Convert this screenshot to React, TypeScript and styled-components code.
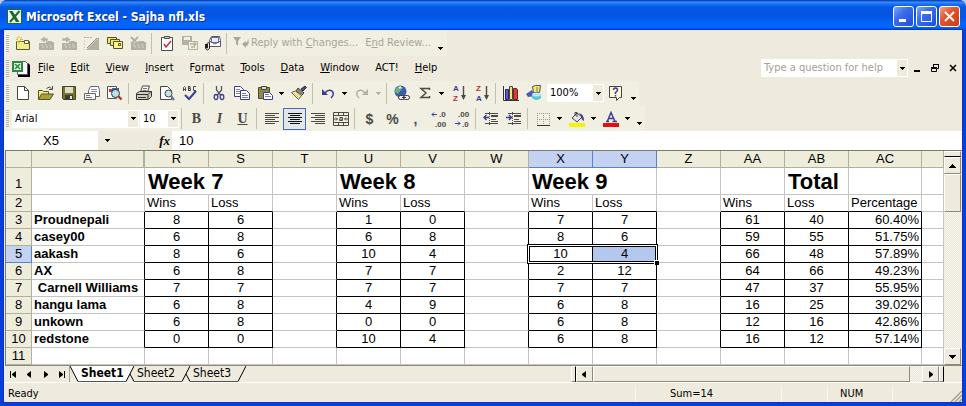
import React from "react";
import styled, { createGlobalStyle, css } from "styled-components";

const UI_FONT = `"DejaVu Sans Condensed", "DejaVu Sans", sans-serif`;
const CELL_FONT = `"Liberation Sans", Arial, sans-serif`;
const FACE = "#eeebde";
const BAR = "#f0efe2";

const Global = createGlobalStyle`
  *, *::before, *::after { box-sizing: border-box; }
  body { margin: 0; background: #b9c8e4; font: 11px/14px ${UI_FONT}; color: #000; }
  button, input, select { font: inherit; color: inherit; margin: 0; padding: 0; border: 0; background: none; border-radius: 0; outline: none; }
  svg { display: block; flex: none; }
`;

/* ---------- window frame ---------- */

const Window = styled.div`
  display: flex;
  flex-direction: column;
  min-height: 100vh;
  border-radius: 7px 7px 0 0;
  overflow: hidden;
  background: #0a3fd6;
`;

const TitleBar = styled.header`
  display: flex;
  align-items: center;
  gap: 4px;
  height: 30px;
  padding: 3px 6px 0 7px;
  background: linear-gradient(#0a48c4 0, #0a48c4 1px, #3d92ff 2px, #1a72f4 4px, #0458e4 7px, #0455e2 16px, #0263fa 22px, #0267ff 27px, #0348d0 30px);
`;

const Title = styled.h1`
  flex: 1;
  margin: 0;
  color: #fff;
  font: bold 12px/18px ${UI_FONT};
  text-shadow: 1px 1px 0 #0a2f8c;
  white-space: nowrap;
`;

const CaptionButtons = styled.div`
  display: flex;
  gap: 2px;
`;

const CaptionButton = styled.button<{ $close?: boolean }>`
  display: grid;
  place-items: center;
  width: 21px;
  height: 21px;
  border: 1px solid #fff;
  border-radius: 3px;
  background: ${(p) =>
    p.$close
      ? "linear-gradient(135deg, #f0a088 0, #e4552c 40%, #cc3c12 100%)"
      : "linear-gradient(135deg, #7fa6f6 0, #3a6cec 40%, #1b4fdc 100%)"};
`;

const Body = styled.div`
  display: flex;
  flex: 1;
  flex-direction: column;
  margin: 0 4px 4px;
  background: ${FACE};
  outline: 1px solid #0831d9;
`;

/* ---------- toolbars ---------- */

const Dock = styled.div<{ $height: number }>`
  display: flex;
  align-items: center;
  height: ${(p) => p.$height}px;
`;

const Bar = styled.div`
  display: flex;
  align-items: center;
  height: 25px;
  padding-left: 2px;
  background: ${BAR};
  border-radius: 2px;
`;

const Grip = styled.span`
  width: 3px;
  height: 17px;
  margin-right: 2px;
  background: repeating-linear-gradient(#b9b6a4 0 1px, ${BAR} 1px 2px);
`;

const Sep = styled.span`
  width: 1px;
  height: 21px;
  margin: 0 3px 0 2px;
  background: #c2bfae;
`;

const ToolButton = styled.button<{ $on?: boolean }>`
  display: grid;
  place-items: center;
  width: 23px;
  height: 22px;
  ${(p) =>
    p.$on &&
    css`
      background: #e1e6e8;
      border: 1px solid #4a6cb8;
    `}
`;

const DropButton = styled.button<{ $wide?: boolean; $low?: boolean }>`
  display: grid;
  place-items: center;
  width: ${(p) => (p.$wide ? 12 : 11)}px;
  height: 22px;
  padding-top: ${(p) => (p.$low ? 10 : 0)}px;
`;

const TextButton = styled.button`
  display: flex;
  align-items: center;
  gap: 2px;
  height: 22px;
  padding: 0 4px 0 3px;
  color: #a9a695;
  white-space: nowrap;
`;

const MenuRow = styled.nav`
  display: flex;
  align-items: center;
  height: 24px;
  padding-left: 2px;
`;

const MenuIcon = styled.span`
  margin-left: 1px;
`;

const MenuButton = styled.button`
  height: 20px;
  padding: 0 8px;
  white-space: nowrap;
`;

const Spacer = styled.span`
  flex: 1;
`;

const AskBox = styled.div`
  display: flex;
  width: 147px;
  height: 18px;
  background: #fff;
`;

const AskInput = styled.input`
  flex: 1;
  min-width: 0;
  padding-left: 3px;
  &::placeholder { color: #a4a195; opacity: 1; }
`;

const AskDrop = styled.button`
  display: grid;
  place-items: center;
  width: 12px;
  border: 1px solid #fff;
  background: ${FACE};
`;

const DocButtons = styled.div`
  display: flex;
`;

const DocButton = styled.button`
  display: grid;
  place-items: center;
  width: 18px;
  height: 18px;
`;

const Combo = styled.label<{ $width: number; $gap: number }>`
  display: grid;
  grid-template-columns: 1fr 12px;
  width: ${(p) => p.$width}px;
  height: 18px;
  margin-left: ${(p) => p.$gap}px;
  background: #fff;
`;

const ComboSelect = styled.select`
  grid-area: 1 / 1 / 2 / 3;
  appearance: none;
  padding-left: 3px;
`;

const ComboArrow = styled.span`
  grid-area: 1 / 2;
  display: grid;
  place-items: center;
  border: 1px solid #fff;
  background: ${FACE};
  pointer-events: none;
`;

const Glyph = styled.span<{ $look: "bold" | "italic" | "underline" | "plain" }>`
  font: bold 14px/16px "Liberation Serif", serif;
  color: #4a4a46;
  ${(p) => p.$look === "italic" && "font-style: italic;"}
  ${(p) => p.$look === "underline" && "text-decoration: underline;"}
  ${(p) => p.$look === "plain" && `font: bold 14px/16px ${CELL_FONT};`}
`;

/* ---------- formula bar ---------- */

const FormulaBar = styled.div`
  display: flex;
  height: 19px;
  font: 13px/18px ${CELL_FONT};
  background: #fff;
`;

const NameBox = styled.input`
  width: 94px;
  text-align: center;
`;

const FormulaTools = styled.div`
  display: flex;
  align-items: center;
  justify-content: space-between;
  width: 74px;
  padding: 0 2px 0 3px;
  background: ${FACE};
`;

const FxButton = styled.button`
  font: italic bold 13px/16px "Liberation Serif", serif;
`;

const FormulaInput = styled.input`
  flex: 1;
  min-width: 0;
  padding-left: 7px;
`;

/* ---------- worksheet ---------- */

const Workspace = styled.div`
  display: flex;
  flex: 1;
  margin-left: 1px;
  border-top: 1px solid #7d7b6d;
  border-left: 1px solid #7d7b6d;
`;

const SheetPane = styled.div`
  flex: 1;
  min-width: 0;
  overflow: hidden;
  background: #fff;
`;

const Grid = styled.table`
  width: 100%;
  table-layout: fixed;
  border-collapse: separate;
  border-spacing: 0;
  font: 13px/16px ${CELL_FONT};
`;

const Col = styled.col<{ $w?: number }>`
  ${(p) => p.$w && `width: ${p.$w}px;`}
`;

const HeadCell = styled.th<{ $active?: boolean; $split?: boolean; $tall?: boolean }>`
  height: ${(p) => (p.$tall ? 27 : 17)}px;
  padding: 0;
  font-weight: normal;
  vertical-align: bottom;
  text-align: center;
  line-height: ${(p) => (p.$tall ? 20 : 16)}px;
  background: ${(p) => (p.$active ? "#c3d2f0" : "#eeeddb")};
  border: solid ${(p) => (p.$active ? "#5a82c6" : "#b2b09c")};
  border-width: 0 ${(p) => (p.$split ? 2 : 1)}px 1px 0;
`;

const Cell = styled.td<{
  $align?: "left" | "center" | "right";
  $bold?: boolean;
  $right?: boolean;
  $bottom?: boolean;
  $fill?: boolean;
}>`
  position: relative;
  height: 17px;
  padding: 0 2px;
  vertical-align: bottom;
  white-space: nowrap;
  text-align: ${(p) => p.$align ?? "left"};
  font-weight: ${(p) => (p.$bold ? "bold" : "normal")};
  background: ${(p) => (p.$fill ? "#b4c8ee" : "#fff")};
  border: solid #c4c4c4;
  border-width: 0 1px 1px 0;
  ${(p) => p.$right && "border-right-color: #000;"}
  ${(p) => p.$bottom && "border-bottom-color: #000;"}
`;

const TitleCell = styled(Cell)`
  height: 27px;
  padding: 0 3px;
  font: bold 22px/24px ${CELL_FONT};
`;

const SelectionFrame = styled.div`
  position: absolute;
  z-index: 1;
  top: -2px;
  left: -2px;
  width: 131px;
  height: 20px;
  border: 1px solid #000;
  box-shadow: inset 0 0 0 1px #fff, inset 0 0 0 2px #000;
  pointer-events: none;
  &::after {
    content: "";
    position: absolute;
    right: -2px;
    bottom: -2px;
    width: 5px;
    height: 5px;
    background: #000;
    border: solid #fff;
    border-width: 1px 0 0 1px;
  }
`;

/* ---------- scroll bars and tabs ---------- */

const track = css`
  background: repeating-conic-gradient(#f7f5ee 0 25%, #e9e6da 0 50%) 0 0 / 2px 2px;
`;

const raised = css`
  background: ${FACE};
  border: 1px solid;
  border-color: #fff #8d8a7b #8d8a7b #fff;
`;

const VScroll = styled.div`
  display: flex;
  flex-direction: column;
  width: 17px;
  margin-right: 1px;
  ${track}
`;

const SplitV = styled.span`
  height: 6px;
  ${raised}
  border-bottom: 1px solid #000;
`;

const ScrollButton = styled.button`
  display: grid;
  place-items: center;
  width: 17px;
  height: 17px;
  ${raised}
`;

const ThumbV = styled.span`
  height: 38px;
  ${raised}
`;

const BottomRow = styled.div`
  display: grid;
  grid-template-columns: 13fr 9fr;
  height: 17px;
  border-top: 1px solid #8d8a7b;
  margin-left: 1px;
`;

const TabStrip = styled.div`
  display: flex;
  min-width: 0;
`;

const NavButton = styled.button`
  display: grid;
  place-items: center;
  width: 16px;
  height: 16px;
`;

const NavEnd = styled.span`
  width: 1px;
  background: #a5a293;
`;

const Tab = styled.button<{ $on?: boolean }>`
  display: flex;
  height: 16px;
  font: ${(p) => (p.$on ? "bold" : "normal")} 12px/15px ${UI_FONT};
`;

const TabLabel = styled.span<{ $on?: boolean }>`
  width: 48px;
  height: 16px;
  padding-left: 3px;
  text-align: left;
  background: ${(p) => (p.$on ? "#fff" : FACE)};
  border-bottom: 1px solid #55534a;
`;

const HScroll = styled.div`
  display: flex;
  min-width: 0;
  ${track}
`;

const SplitH = styled.span`
  width: 5px;
  ${raised}
  border-right: 1px solid #000;
`;

const HButton = styled(ScrollButton)`
  height: 16px;
`;

const ThumbH = styled.span`
  flex: 1;
  margin-right: 12px;
  ${raised}
`;

const Corner = styled.span`
  width: 18px;
  background: ${FACE};
`;

const StatusBar = styled.footer`
  display: flex;
  align-items: center;
  height: 20px;
  border-top: 1px solid #fff;
  padding: 2px 0 0 4px;
`;

const StatusText = styled.span`
  flex: 1;
  height: 16px;
  line-height: 16px;
`;

const StatusPane = styled.span<{ $w: number; $indent?: number }>`
  width: ${(p) => p.$w}px;
  height: 16px;
  line-height: 16px;
  padding-left: ${(p) => p.$indent ?? 0}px;
  border-left: 1px solid #f8f6ee;
`;

const Resize = styled.span`
  align-self: flex-end;
`;

/* ---------- icons ---------- */

type Art = { children: React.ReactNode; w?: number; h?: number };
const Svg = ({ children, w = 16, h = 16 }: Art) => (
  <svg width={w} height={h} viewBox={`0 0 ${w} ${h}`} fill="none" aria-hidden="true">
    {children}
  </svg>
);

const DownArrow = ({ color = "#000" }: { color?: string }) => (
  <Svg w={5} h={3}>
    <path d="M0 0h5v1H4v1H3v1H2V2H1V1H0z" fill={color} />
  </Svg>
);

const dim = "#b3b1a1";
const ink = "#4c4b46";
const navy = "#3c3c96";

const DimFolder = ({ children }: { children?: React.ReactNode }) => (
  <Svg>
    <path d="M1 8h7V6h6v1h2v8H1z" fill={dim} />
    <path d="M3 10h2M7 10h2M11 10h2M4 12h2M8 12h2M12 12h2" stroke="#d9d7ca" />
    {children}
  </Svg>
);

const icons = {
  newFolder: (
    <Svg>
      <path d="M1.500 6.500h13v8h-13z" fill="#f4ee86" stroke="#5c5a34" />
      <path d="M9.500 5.500h4v3h-4z" fill="#fffbd0" stroke="#5c5a34" />
      <path d="M4 1v8M1 4.500h7M1.500 2l5 5M7 2L2 7" stroke="#d9c22c" />
      <path d="M4 3.500v2" stroke="#fff" strokeWidth="2" />
    </Svg>
  ),
  folderBack: (
    <DimFolder>
      <path d="M7 1L2 4.500 7 8V6h3V3H7z" fill={dim} stroke={BAR} strokeWidth=".6" />
    </DimFolder>
  ),
  folderNext: (
    <DimFolder>
      <path d="M5 1l5 3.500L5 8V6H1V3h4z" fill={dim} stroke={BAR} strokeWidth=".6" />
    </DimFolder>
  ),
  editComment: (
    <Svg>
      <path d="M0 2.500h9" stroke={dim} strokeDasharray="2 1" />
      <path d="M15 2L4 13l-2 2h13z" fill={dim} />
      <path d="M0 5v10" stroke={dim} strokeDasharray="2 1" />
      <path d="M13 3L3 13" stroke="#8f8d80" />
    </Svg>
  ),
  folders: (
    <Svg>
      <path d="M.5 2.500h9v6h-9z" fill="#efe66c" stroke="#55532a" />
      <path d="M3.500 4.500h9v6h-9z" fill="#efe66c" stroke="#55532a" />
      <path d="M6.500 6.500h9v7h-9z" fill="#fbf48c" stroke="#55532a" />
      <path d="M11.500 8.500h2v2h-2z" stroke="#55532a" />
    </Svg>
  ),
  folderDelete: (
    <DimFolder>
      <path d="M1 2l7 7M8 2L1 9" stroke={dim} strokeWidth="2" />
    </DimFolder>
  ),
  task: (
    <Svg>
      <path d="M2.500 2.500h11v13h-11z" fill="#fff" stroke={ink} />
      <path d="M5.500 1.500h5v2h-5z" fill="#d8d6c8" stroke={ink} />
      <path d="M5 9l2 3 5-6" stroke="#c43048" strokeWidth="1.600" />
    </Svg>
  ),
  update: (
    <Svg>
      <path d="M0 1h10v9H0z" fill={dim} />
      <path d="M2 2h6v3H2z" fill={BAR} />
      <path d="M6.500 6.500h9v8h-9z" fill={BAR} stroke={dim} />
      <path d="M8 9h5M12 7l2 2-2 2M13 12H9" stroke={dim} strokeWidth="1.500" />
    </Svg>
  ),
  mailClip: (
    <Svg>
      <path d="M4.500 5.500L6.500 1.500h8l1 4v6h-11z" fill="#fff" stroke="#55556c" />
      <path d="M6.500 2.500h7v5h-7z" fill="#e8eefc" stroke="#6c6c9c" />
      <path d="M4.500 6l5.500 3 5.500-3" stroke="#55556c" />
      <path d="M.5 9v4.500q2 3 4 0V8.500q-1-2-3 .5V13h1V9" stroke="#222" />
    </Svg>
  ),
  reply: (
    <Svg>
      <path d="M0 2h8L5 6v5L3 9V6z" fill="#a9a798" />
      <path d="M9 9l4-3v2q2-1 2-5 2 7-2 8v2z" fill="#a9a798" />
    </Svg>
  ),
  blank: (
    <Svg>
      <path d="M2.500 1.500h7l4 4v9h-11z" fill="#fff" stroke="#444" />
      <path d="M9.500 1.500v4h4" stroke="#444" />
    </Svg>
  ),
  open: (
    <Svg>
      <path d="M.5 14.500v-9h4l1 1h5v3" fill="#f3e88c" stroke="#5a5620" />
      <path d="M.5 14.500l3-5.500h12l-3.500 5.500z" fill="#a8a03c" stroke="#5a5620" />
      <path d="M8.500 3.500q3-3 5 0M14.500 1v3.500H11" stroke="#444" />
    </Svg>
  ),
  save: (
    <Svg>
      <path d="M1.500 1.500h13v13h-12l-1-1z" fill="#77752f" stroke="#44431f" />
      <path d="M4 2h8v6H4z" fill="#dedccb" />
      <path d="M4 10h8v5H4z" fill="#3b3b33" />
      <path d="M9 11h2v3H9z" fill="#e8e6da" />
    </Svg>
  ),
  mail: (
    <Svg>
      <path d="M4.500 5.500L6.500 1.500h8l1 4v6h-11z" fill="#fff" stroke="#666" />
      <path d="M7 4.500h6M7 6.500h6" stroke="#8888b8" />
      <path d="M.5 8.500h11v6H.5z" fill="#f6f6fa" stroke="#666" />
      <path d="M2 10.500h4M2 12.500h6" stroke="#777" />
    </Svg>
  ),
  search: (
    <Svg>
      <path d="M.5 1.500h9v12h-9z" fill="#fff" stroke="#555" />
      <path d="M2 4h3v3H2z" fill="#c03838" />
      <path d="M5 3h7v6H5z" fill="#4a5aa8" />
      <circle cx="8.500" cy="8.500" r="4" fill="#b8e2e6" stroke="#333" />
      <path d="M11.500 11.500l3 3" stroke="#a83030" strokeWidth="2.400" />
    </Svg>
  ),
  print: (
    <Svg>
      <path d="M4.500 7l2-6h7l-2 6z" fill="#fff" stroke="#444" />
      <path d="M7 3.500h4M6.500 5.500h4" stroke="#777" />
      <path d="M.5 8.500l3-2h12v5l-3 3H.5z" fill="#cfcdc0" stroke="#333" />
      <path d="M.5 9.500h11.500l3-3M12 9.500V14M2 12.500h8" stroke="#333" />
    </Svg>
  ),
  preview: (
    <Svg>
      <path d="M1.500 1.500h7l4 4v9h-11z" fill="#fff" stroke="#444" />
      <circle cx="9.500" cy="8.500" r="3.500" fill="#c4e4ea" stroke="#444" />
      <path d="M12 11l3 4" stroke="#66769c" strokeWidth="2.200" />
    </Svg>
  ),
  spell: (
    <Svg>
      <path d="M1.500 6V2.500l1-1 1 1V6M1.500 4.500h2M6.500 1v5M6 1.500h2v2H6.500M8.500 3.500v2H6.500M14 1.500h-2.500v4H14" stroke="#444" />
      <path d="M3 10l4 4 7-8" stroke={navy} strokeWidth="2" />
    </Svg>
  ),
  cut: (
    <Svg>
      <path d="M5.500 1v4l4 5M10.500 1v4l-4 5" stroke="#555" strokeWidth="1.300" />
      <ellipse cx="5" cy="12" rx="1.800" ry="2.500" stroke={navy} strokeWidth="1.300" />
      <ellipse cx="11" cy="12" rx="1.800" ry="2.500" stroke={navy} strokeWidth="1.300" />
    </Svg>
  ),
  copy: (
    <Svg>
      <path d="M.5 1.500h6l3 3v7h-9z" fill="#fff" stroke={navy} />
      <path d="M2 4.500h4M2 6.500h5M2 8.500h5" stroke="#7a7ab0" />
      <path d="M6.500 5.500h6l3 3v6h-9z" fill="#fff" stroke={navy} />
      <path d="M8 8.500h4M8 10.500h6M8 12.500h6" stroke="#7a7ab0" />
    </Svg>
  ),
  paste: (
    <Svg>
      <path d="M1.500 2.500h11v11h-11z" fill="#8c8a44" stroke="#4c4a24" />
      <path d="M4.500 1.500h5v3h-5z" fill="#d8d6c4" stroke="#444" />
      <path d="M6.500 7.500h6l3 3v4h-9z" fill="#fff" stroke={navy} />
      <path d="M8 9.500h4M8 11.500h6" stroke="#7a7ab0" />
    </Svg>
  ),
  painter: (
    <Svg>
      <path d="M14 1l1.500 1.500L12 6 10 4z" fill="#4a4a8c" stroke="#333" />
      <path d="M7 3l6 5-2.500 2.500L5 6z" fill="#8c8a78" stroke="#444" />
      <path d="M4.500 6L.5 7.500l7 7 3-4z" fill="#f8f4b4" stroke="#66642c" />
      <path d="M3 8l5 5M5 7.500l4 4" stroke="#c8c27c" />
    </Svg>
  ),
  undo: (
    <Svg>
      <path d="M2 4v6h6z" fill={navy} />
      <path d="M5 8q3-4 7-2 3 3-1 7" stroke={navy} strokeWidth="1.500" />
    </Svg>
  ),
  redo: (
    <Svg>
      <path d="M14 4v6H8z" fill={dim} />
      <path d="M11 8Q8 4 4 6q-3 3 1 7" stroke={dim} strokeWidth="1.500" />
    </Svg>
  ),
  link: (
    <Svg>
      <circle cx="6.500" cy="6.500" r="6" fill="#3c5cb0" />
      <path d="M2 3l4-2 3 2-3 3-2 3-3-2z" fill="#6cb47c" />
      <path d="M5 3l2-1" stroke="#fff" strokeWidth="1.500" />
      <rect x="4.500" y="10.500" width="6" height="4" rx="2" fill="#eee" stroke="#333" />
      <rect x="9.500" y="10.500" width="6" height="4" rx="2" fill="#eee" stroke="#333" />
      <path d="M8 12.500h4" stroke="#333" />
    </Svg>
  ),
  sum: (
    <Svg>
      <path d="M12.500 5V3.500H4l5 4.500-5 4.500h8.500V11" stroke={ink} strokeWidth="1.500" />
    </Svg>
  ),
  chart: (
    <Svg>
      <path d="M2.500 4.500h3v10h-3z" fill="#5c5cc4" stroke="#24246c" />
      <path d="M6.500 1.500h3v13h-3z" fill="#f0e860" stroke="#444" />
      <path d="M10.500 3.500h3l1 1v10h-4z" fill="#d83c3c" stroke="#702020" />
      <path d="M.5 1v14.500H16" stroke="#333" />
    </Svg>
  ),
  draw: (
    <Svg>
      <path d="M6.500 1.500l3-1h5l-1 7h-6z" fill="#f4ea60" stroke="#555" />
      <path d="M0 9l6-4 3 6-7 1z" fill="#4c5cb4" />
      <path d="M6 9h9v4q-4.500 4-9 0z" fill="#58c4d4" />
      <ellipse cx="10.500" cy="9.500" rx="4.500" ry="2" fill="#b4ecf2" />
      <path d="M11 2v5" stroke="#777" />
    </Svg>
  ),
  help: (
    <Svg>
      <path d="M1.500 1.500h12v11h-2l-3 3v-3h-7z" fill="#fbf9d8" stroke="#444" />
      <path d="M5.500 5q0-2 2-2t2 2q0 1-2 2.500V9M7.500 10v1.500" stroke={navy} strokeWidth="1.500" />
    </Svg>
  ),
  merge: (
    <Svg>
      <path d="M.5 1.500h15v13H.500zM.500 4.500h15M.500 11.500h15M5.500 1.500v3M10.500 1.500v3M5.500 11.500v3M10.500 11.500v3" stroke={ink} />
      <path d="M1 8h3M12 8h3M3 6.500L4.500 8 3 9.500M13 6.500L11.500 8l1.500 1.500" stroke={ink} />
      <path d="M6.500 6.500h3v3h-3V8h3" stroke={ink} />
    </Svg>
  ),
  borders: (
    <Svg>
      <path d="M2 2.500h13M2 8.500h13M2.500 2v12M8.500 2v12M14.500 2v12" stroke="#99978a" strokeDasharray="1 1" />
      <path d="M2 14.500h13" stroke="#333" />
    </Svg>
  ),
  fill: (
    <Svg>
      <path d="M3 7l5-5 5 4-5 5z" fill="#e4e4ee" stroke="#444" />
      <path d="M6 5V1.500h2V6" stroke="#444" />
      <path d="M10 2q5 1 5 8-3-1-3-5z" fill={navy} />
      <path d="M0 12h16v4H0z" fill="#f8f400" />
    </Svg>
  ),
  fontColor: (
    <Svg>
      <path d="M3 10.500h3M9.500 10.500H14M4.500 10L8 1.500l4 9M6 7.500h5" stroke={navy} strokeWidth="1.500" />
      <path d="M0 12h16v4H0z" fill="#e80c0c" />
    </Svg>
  ),
};

const AlignIcon = ({ side, color = ink }: { side: "left" | "center" | "right"; color?: string }) => {
  const shift = { left: 0, center: 2, right: 4 }[side];
  return (
    <Svg>
      {[2, 4, 6, 8, 10, 12].map((y, i) => {
        const short = i % 2 === 1;
        const x = 1 + (short ? shift : 0);
        return <path key={y} d={`M${x} ${y + 0.5}h${short ? 10 : 14}`} stroke={color} />;
      })}
    </Svg>
  );
};

const IndentIcon = ({ inward }: { inward?: boolean }) => (
  <Svg>
    <path d="M2 2.500h13M8 4.500h7M8 5.500h7M8 8.500h5M8 10.500h7M2 12.500h13" stroke={ink} />
    <path d={inward ? "M0 6.500h5M3 4l2.500 2.500L3 9" : "M1 6.500h5M3.500 4L1 6.500 3.500 9"} stroke={navy} strokeWidth="1.400" />
    <path d="M6.500 1v13" stroke={ink} strokeDasharray="1 1" />
  </Svg>
);

const SvgLetter = styled.text`
  font: bold 8px "Liberation Sans", sans-serif;
`;

const SortIcon = ({ top, bottom }: { top: string; bottom: string }) => (
  <Svg h={20}>
    <SvgLetter x="2" y="8" fill={top === "A" ? navy : "#b03038"}>{top}</SvgLetter>
    <SvgLetter x="2" y="18" fill={bottom === "A" ? navy : "#b03038"}>{bottom}</SvgLetter>
    <path d="M12.500 3v12" stroke={ink} strokeWidth="1.400" />
    <path d="M10 12h5l-2.500 5z" fill={ink} />
  </Svg>
);

const DecimalIcon = ({ more }: { more?: boolean }) => (
  <Svg h={20}>
    <SvgLetter x={more ? 8 : 4} y="8" fill={ink}>{more ? ".0" : ".00"}</SvgLetter>
    <SvgLetter x={more ? 4 : 8} y="18" fill={ink}>{more ? ".00" : ".0"}</SvgLetter>
    <path d={more ? "M1 5.500h5M3 3.500l-2 2 2 2" : "M1 14.500h5M4 12.500l2 2-2 2"} stroke={navy} />
  </Svg>
);

const ExcelIcon = () => (
  <Svg w={15} h={15}>
    <path d="M0 0h15v15H0z" fill="#1a6b2c" />
    <path d="M1 1h13v13H1z" fill="#f0f8ee" />
    <path d="M2 2h3.500l7 11H9z" fill="#1a6b2c" />
    <path d="M12.500 2L3 13" stroke="#1a6b2c" strokeWidth="2" />
  </Svg>
);

const WorkbookIcon = () => (
  <Svg w={18} h={17}>
    <path d="M6 3h10l2 2v12H6z" fill="#000" />
    <path d="M5.500 1.500h8l2 2v11h-10z" fill="#fff" stroke="#555" />
    <path d="M0 1h11v11H0z" fill="#2a8a3e" />
    <path d="M2 3h7v7H2z" fill="#e8f6e6" />
    <path d="M3 4l5 5M8 4L3 9" stroke="#2a8a3e" strokeWidth="1.600" />
  </Svg>
);

/* ---------- data ---------- */

const menus = ["File", "Edit", "View", "Insert", "F|ormat", "Tools", "Data", "Window", "ACT!", "Help"];

const columns = [
  ["A", 113], ["R", 64], ["S", 64], ["T", 64], ["U", 64], ["V", 64], ["W", 64],
  ["X", 64], ["Y", 64], ["Z", 64], ["AA", 64], ["AB", 64], ["AC", 73],
] as const;

const standings = [
  ["Proudnepali", 8, 6, 1, 0, 7, 7, 61, 40, "60.40%"],
  ["casey00", 6, 8, 6, 8, 8, 6, 59, 55, "51.75%"],
  ["aakash", 8, 6, 10, 4, 10, 4, 66, 48, "57.89%"],
  ["AX", 6, 8, 7, 7, 2, 12, 64, 66, "49.23%"],
  ["Carnell Williams", 7, 7, 7, 7, 7, 7, 47, 37, "55.95%"],
  ["hangu lama", 6, 8, 4, 9, 6, 8, 16, 25, "39.02%"],
  ["unkown", 6, 8, 0, 0, 6, 8, 12, 16, "42.86%"],
  ["redstone", 0, 0, 10, 4, 6, 8, 16, 12, "57.14%"],
];

const Mnemonic = ({ text }: { text: string }) => {
  if (text === "ACT!") return <>{text}</>;
  const cut = text.indexOf("|");
  const label = text.replace("|", "");
  const at = cut < 0 ? 0 : cut;
  return <>{label.slice(0, at)}<u>{label[at]}</u>{label.slice(at + 1)}</>;
};

const Tool = ({ label, icon, on }: { label: string; icon: React.ReactNode; on?: boolean }) => (
  <ToolButton aria-label={label} $on={on}>{icon}</ToolButton>
);

const Drop = ({ label, color, ...rest }: { label: string; color?: string; $wide?: boolean; $low?: boolean }) => (
  <DropButton aria-label={label} {...rest}><DownArrow color={color} /></DropButton>
);

const ComboBox = ({ label, value, width, gap }: { label: string; value: string; width: number; gap: number }) => (
  <Combo $width={width} $gap={gap}>
    <ComboSelect aria-label={label}><option>{value}</option></ComboSelect>
    <ComboArrow><DownArrow /></ComboArrow>
  </Combo>
);

const ScoreRow = ({ row, index }: { row: (string | number)[]; index: number }) => {
  const [name, r, s, u, v, x, y, aa, ab, ac] = row;
  const active = index === 5;
  return (
    <tr>
      <HeadCell scope="row" $active={active}>{index}</HeadCell>
      <Cell $bold $right $align={name === "Carnell Williams" ? "center" : "left"}>{name}</Cell>
      <Cell $align="center" $right $bottom>{r}</Cell>
      <Cell $align="center" $right $bottom>{s}</Cell>
      <Cell $right />
      <Cell $align="center" $right $bottom>{u}</Cell>
      <Cell $align="center" $right $bottom>{v}</Cell>
      <Cell $right />
      <Cell $align="center" $right $bottom>{x}{active && <SelectionFrame />}</Cell>
      <Cell $align="center" $right $bottom $fill={active}>{y}</Cell>
      <Cell $right />
      <Cell $align="center" $right $bottom>{aa}</Cell>
      <Cell $align="center" $right $bottom>{ab}</Cell>
      <Cell $align="right" $right $bottom>{ac}</Cell>
      <Cell />
    </tr>
  );
};

const Worksheet = () => (
  <Grid>
    <colgroup>
      <Col $w={26} />
      {columns.map(([name, w]) => <Col key={name} $w={w} />)}
      <Col />
    </colgroup>
    <thead>
      <tr>
        <HeadCell />
        {columns.map(([name]) => (
          <HeadCell key={name} scope="col" $active={name === "X" || name === "Y"} $split={name === "A"}>{name}</HeadCell>
        ))}
        <HeadCell />
      </tr>
    </thead>
    <tbody>
      <tr>
        <HeadCell scope="row" $tall>1</HeadCell>
        <Cell />
        <TitleCell colSpan={2}>Week 7</TitleCell>
        <Cell />
        <TitleCell colSpan={2}>Week 8</TitleCell>
        <Cell />
        <TitleCell colSpan={2}>Week 9</TitleCell>
        <Cell />
        <Cell />
        <TitleCell>Total</TitleCell>
        <Cell />
        <Cell />
      </tr>
      <tr>
        <HeadCell scope="row">2</HeadCell>
        <Cell />
        <Cell $bottom>Wins</Cell>
        <Cell $bottom>Loss</Cell>
        <Cell />
        <Cell $bottom>Wins</Cell>
        <Cell $bottom>Loss</Cell>
        <Cell />
        <Cell $bottom>Wins</Cell>
        <Cell $bottom>Loss</Cell>
        <Cell />
        <Cell $bottom>Wins</Cell>
        <Cell $bottom>Loss</Cell>
        <Cell $bottom>Percentage</Cell>
        <Cell />
      </tr>
      {standings.map((row, i) => <ScoreRow key={i} row={row} index={i + 3} />)}
      <tr>
        <HeadCell scope="row">11</HeadCell>
        {columns.map(([name]) => <Cell key={name} />)}
        <Cell />
      </tr>
    </tbody>
  </Grid>
);

const TabEdge = ({ last, afterActive }: { last?: boolean; afterActive?: boolean }) => (
  <Svg w={8} h={16}>
    {afterActive && <path d="M0 0h7L0 15z" fill="#fff" />}
    <path d="M0 15.500L8 0" stroke="#000" />
    {!last && <path d="M4 8l4 7.500" stroke="#000" />}
  </Svg>
);

export default function App() {
  return (
    <>
      <Global />
      <Window>
        <TitleBar>
          <ExcelIcon />
          <Title>Microsoft Excel - Sajha nfl.xls</Title>
          <CaptionButtons>
            <CaptionButton aria-label="Minimize"><Svg w={13} h={13}><path d="M2 9h7v3H2z" fill="#fff" /></Svg></CaptionButton>
            <CaptionButton aria-label="Maximize">
              <Svg w={13} h={13}><path d="M1.500 2.500h10v9h-10z" stroke="#fff" /><path d="M1 2.500h11" stroke="#fff" strokeWidth="3" /></Svg>
            </CaptionButton>
            <CaptionButton aria-label="Close" $close>
              <Svg w={13} h={13}><path d="M2 2l9 9M11 2l-9 9" stroke="#fff" strokeWidth="2" /></Svg>
            </CaptionButton>
          </CaptionButtons>
        </TitleBar>
        <Body>
          <Dock $height={26}>
            <Bar role="toolbar" aria-label="Reviewing">
              <Grip />
              <Tool label="New Comment" icon={icons.newFolder} />
              <Tool label="Previous Comment" icon={icons.folderBack} />
              <Tool label="Next Comment" icon={icons.folderNext} />
              <Tool label="Show Comment" icon={icons.editComment} />
              <Tool label="Show All Comments" icon={icons.folders} />
              <Tool label="Delete Comment" icon={icons.folderDelete} />
              <Sep />
              <Tool label="Create Task" icon={icons.task} />
              <Tool label="Update File" icon={icons.update} />
              <Tool label="Send as Attachment" icon={icons.mailClip} />
              <Sep />
              <TextButton>{icons.reply}<span>Reply with <u>C</u>hanges...</span></TextButton>
              <TextButton><span>E<u>n</u>d Review...</span></TextButton>
              <Drop label="Toolbar options" $wide $low />
            </Bar>
          </Dock>
          <MenuRow>
            <Grip />
            <MenuIcon><WorkbookIcon /></MenuIcon>
            {menus.map((m) => <MenuButton key={m}><Mnemonic text={m} /></MenuButton>)}
            <Spacer />
            <AskBox>
              <AskInput aria-label="Type a question for help" placeholder="Type a question for help" />
              <AskDrop aria-label="Recent questions"><DownArrow /></AskDrop>
            </AskBox>
            <DocButtons>
              <DocButton aria-label="Minimize workbook"><Svg w={10} h={10}><path d="M2 7h6v2H2z" fill="#000" /></Svg></DocButton>
              <DocButton aria-label="Restore workbook">
                <Svg w={10} h={10}><path d="M3.500 4V1.500h5v4H7M3 1.500h6M1.500 5.500h5v3h-5zM1 4.500h6" stroke="#000" /></Svg>
              </DocButton>
              <DocButton aria-label="Close workbook"><Svg w={10} h={10}><path d="M2 2l6 6M8 2L2 8" stroke="#000" strokeWidth="1.500" /></Svg></DocButton>
            </DocButtons>
          </MenuRow>
          <Dock $height={26}>
            <Bar role="toolbar" aria-label="Standard">
              <Grip />
              <Tool label="New" icon={icons.blank} />
              <Tool label="Open" icon={icons.open} />
              <Tool label="Save" icon={icons.save} />
              <Tool label="E-mail" icon={icons.mail} />
              <Tool label="Search" icon={icons.search} />
              <Sep />
              <Tool label="Print" icon={icons.print} />
              <Tool label="Print Preview" icon={icons.preview} />
              <Tool label="Spelling" icon={icons.spell} />
              <Sep />
              <Tool label="Cut" icon={icons.cut} />
              <Tool label="Copy" icon={icons.copy} />
              <Tool label="Paste" icon={icons.paste} />
              <Drop label="Paste options" />
              <Tool label="Format Painter" icon={icons.painter} />
              <Sep />
              <Tool label="Undo" icon={icons.undo} />
              <Drop label="Undo list" />
              <Tool label="Redo" icon={icons.redo} />
              <Drop label="Redo list" color={dim} />
              <Sep />
              <Tool label="Insert Hyperlink" icon={icons.link} />
              <Tool label="AutoSum" icon={icons.sum} />
              <Drop label="AutoSum options" />
              <Tool label="Sort Ascending" icon={<SortIcon top="A" bottom="Z" />} />
              <Tool label="Sort Descending" icon={<SortIcon top="Z" bottom="A" />} />
              <Sep />
              <Tool label="Chart Wizard" icon={icons.chart} />
              <Tool label="Drawing" icon={icons.draw} />
              <ComboBox label="Zoom" value="100%" width={57} gap={2} />
              <Tool label="Help" icon={icons.help} />
              <Drop label="Toolbar options" $wide $low />
            </Bar>
          </Dock>
          <Dock $height={25}>
            <Bar role="toolbar" aria-label="Formatting">
              <Grip />
              <ComboBox label="Font" value="Arial" width={127} gap={1} />
              <ComboBox label="Font Size" value="10" width={39} gap={1} />
              <Sep />
              <Tool label="Bold" icon={<Glyph $look="bold">B</Glyph>} />
              <Tool label="Italic" icon={<Glyph $look="italic">I</Glyph>} />
              <Tool label="Underline" icon={<Glyph $look="underline">U</Glyph>} />
              <Sep />
              <Tool label="Align Left" icon={<AlignIcon side="left" />} />
              <Tool label="Center" on icon={<AlignIcon side="center" color="#111" />} />
              <Tool label="Align Right" icon={<AlignIcon side="right" />} />
              <Tool label="Merge and Center" icon={icons.merge} />
              <Sep />
              <Tool label="Currency Style" icon={<Glyph $look="plain">$</Glyph>} />
              <Tool label="Percent Style" icon={<Glyph $look="plain">%</Glyph>} />
              <Tool label="Comma Style" icon={<Glyph $look="plain">,</Glyph>} />
              <Tool label="Increase Decimal" icon={<DecimalIcon more />} />
              <Tool label="Decrease Decimal" icon={<DecimalIcon />} />
              <Sep />
              <Tool label="Decrease Indent" icon={<IndentIcon />} />
              <Tool label="Increase Indent" icon={<IndentIcon inward />} />
              <Sep />
              <Tool label="Borders" icon={icons.borders} />
              <Drop label="Border options" />
              <Tool label="Fill Color" icon={icons.fill} />
              <Drop label="Fill colors" />
              <Tool label="Font Color" icon={icons.fontColor} />
              <Drop label="Font colors" />
              <Drop label="Toolbar options" $wide $low />
            </Bar>
          </Dock>
          <FormulaBar>
            <NameBox aria-label="Name Box" defaultValue="X5" />
            <FormulaTools>
              <Drop label="Names" $wide />
              <FxButton aria-label="Insert Function">fx</FxButton>
            </FormulaTools>
            <FormulaInput aria-label="Formula" defaultValue="10" />
          </FormulaBar>
          <Workspace>
            <SheetPane><Worksheet /></SheetPane>
            <VScroll>
              <SplitV />
              <ScrollButton aria-label="Scroll up"><Svg w={7} h={4}><path d="M0 4h7V3H6V2H5V1H4V0H3v1H2v1H1v1H0z" fill="#000" /></Svg></ScrollButton>
              <ThumbV />
              <Spacer />
              <ScrollButton aria-label="Scroll down"><Svg w={7} h={4}><path d="M0 0h7v1H6v1H5v1H4v1H3V3H2V2H1V1H0z" fill="#000" /></Svg></ScrollButton>
            </VScroll>
          </Workspace>
          <BottomRow>
            <TabStrip>
              <NavButton aria-label="First sheet"><Svg w={7} h={7}><path d="M0 0h1v7H0zM6 0v7L2 4V3z" fill="#000" /></Svg></NavButton>
              <NavButton aria-label="Previous sheet"><Svg w={5} h={7}><path d="M4 0v7L0 4V3z" fill="#000" /></Svg></NavButton>
              <NavButton aria-label="Next sheet"><Svg w={5} h={7}><path d="M1 0v7l4-3V3z" fill="#000" /></Svg></NavButton>
              <NavButton aria-label="Last sheet"><Svg w={7} h={7}><path d="M6 0h1v7H6zM1 0v7l4-3V3z" fill="#000" /></Svg></NavButton>
              <NavEnd />
              <Tab $on>
                <Svg w={8} h={16}><path d="M0 0h8v15z" fill="#fff" /><path d="M0 0l8 15.500" stroke="#000" /></Svg>
                <TabLabel $on>Sheet1</TabLabel>
                <TabEdge afterActive />
              </Tab>
              <Tab><TabLabel>Sheet2</TabLabel><TabEdge /></Tab>
              <Tab><TabLabel>Sheet3</TabLabel><TabEdge last /></Tab>
            </TabStrip>
            <HScroll>
              <SplitH />
              <HButton aria-label="Scroll left"><Svg w={4} h={7}><path d="M4 0v7L0 4V3z" fill="#000" /></Svg></HButton>
              <ThumbH />
              <HButton aria-label="Scroll right"><Svg w={4} h={7}><path d="M0 0v7l4-3V3z" fill="#000" /></Svg></HButton>
              <SplitH />
              <Corner />
            </HScroll>
          </BottomRow>
          <StatusBar>
            <StatusText>Ready</StatusText>
            <StatusPane $w={146} $indent={34}>Sum=14</StatusPane>
            <StatusPane $w={46} />
            <StatusPane $w={65} $indent={12}>NUM</StatusPane>
            <StatusPane $w={58} />
            <Resize><Svg w={12} h={12}><path d="M1 12L12 1M5 12l7-7M9 12l3-3" stroke="#a5a293" strokeWidth="1.500" /></Svg></Resize>
          </StatusBar>
        </Body>
      </Window>
    </>
  );
}
